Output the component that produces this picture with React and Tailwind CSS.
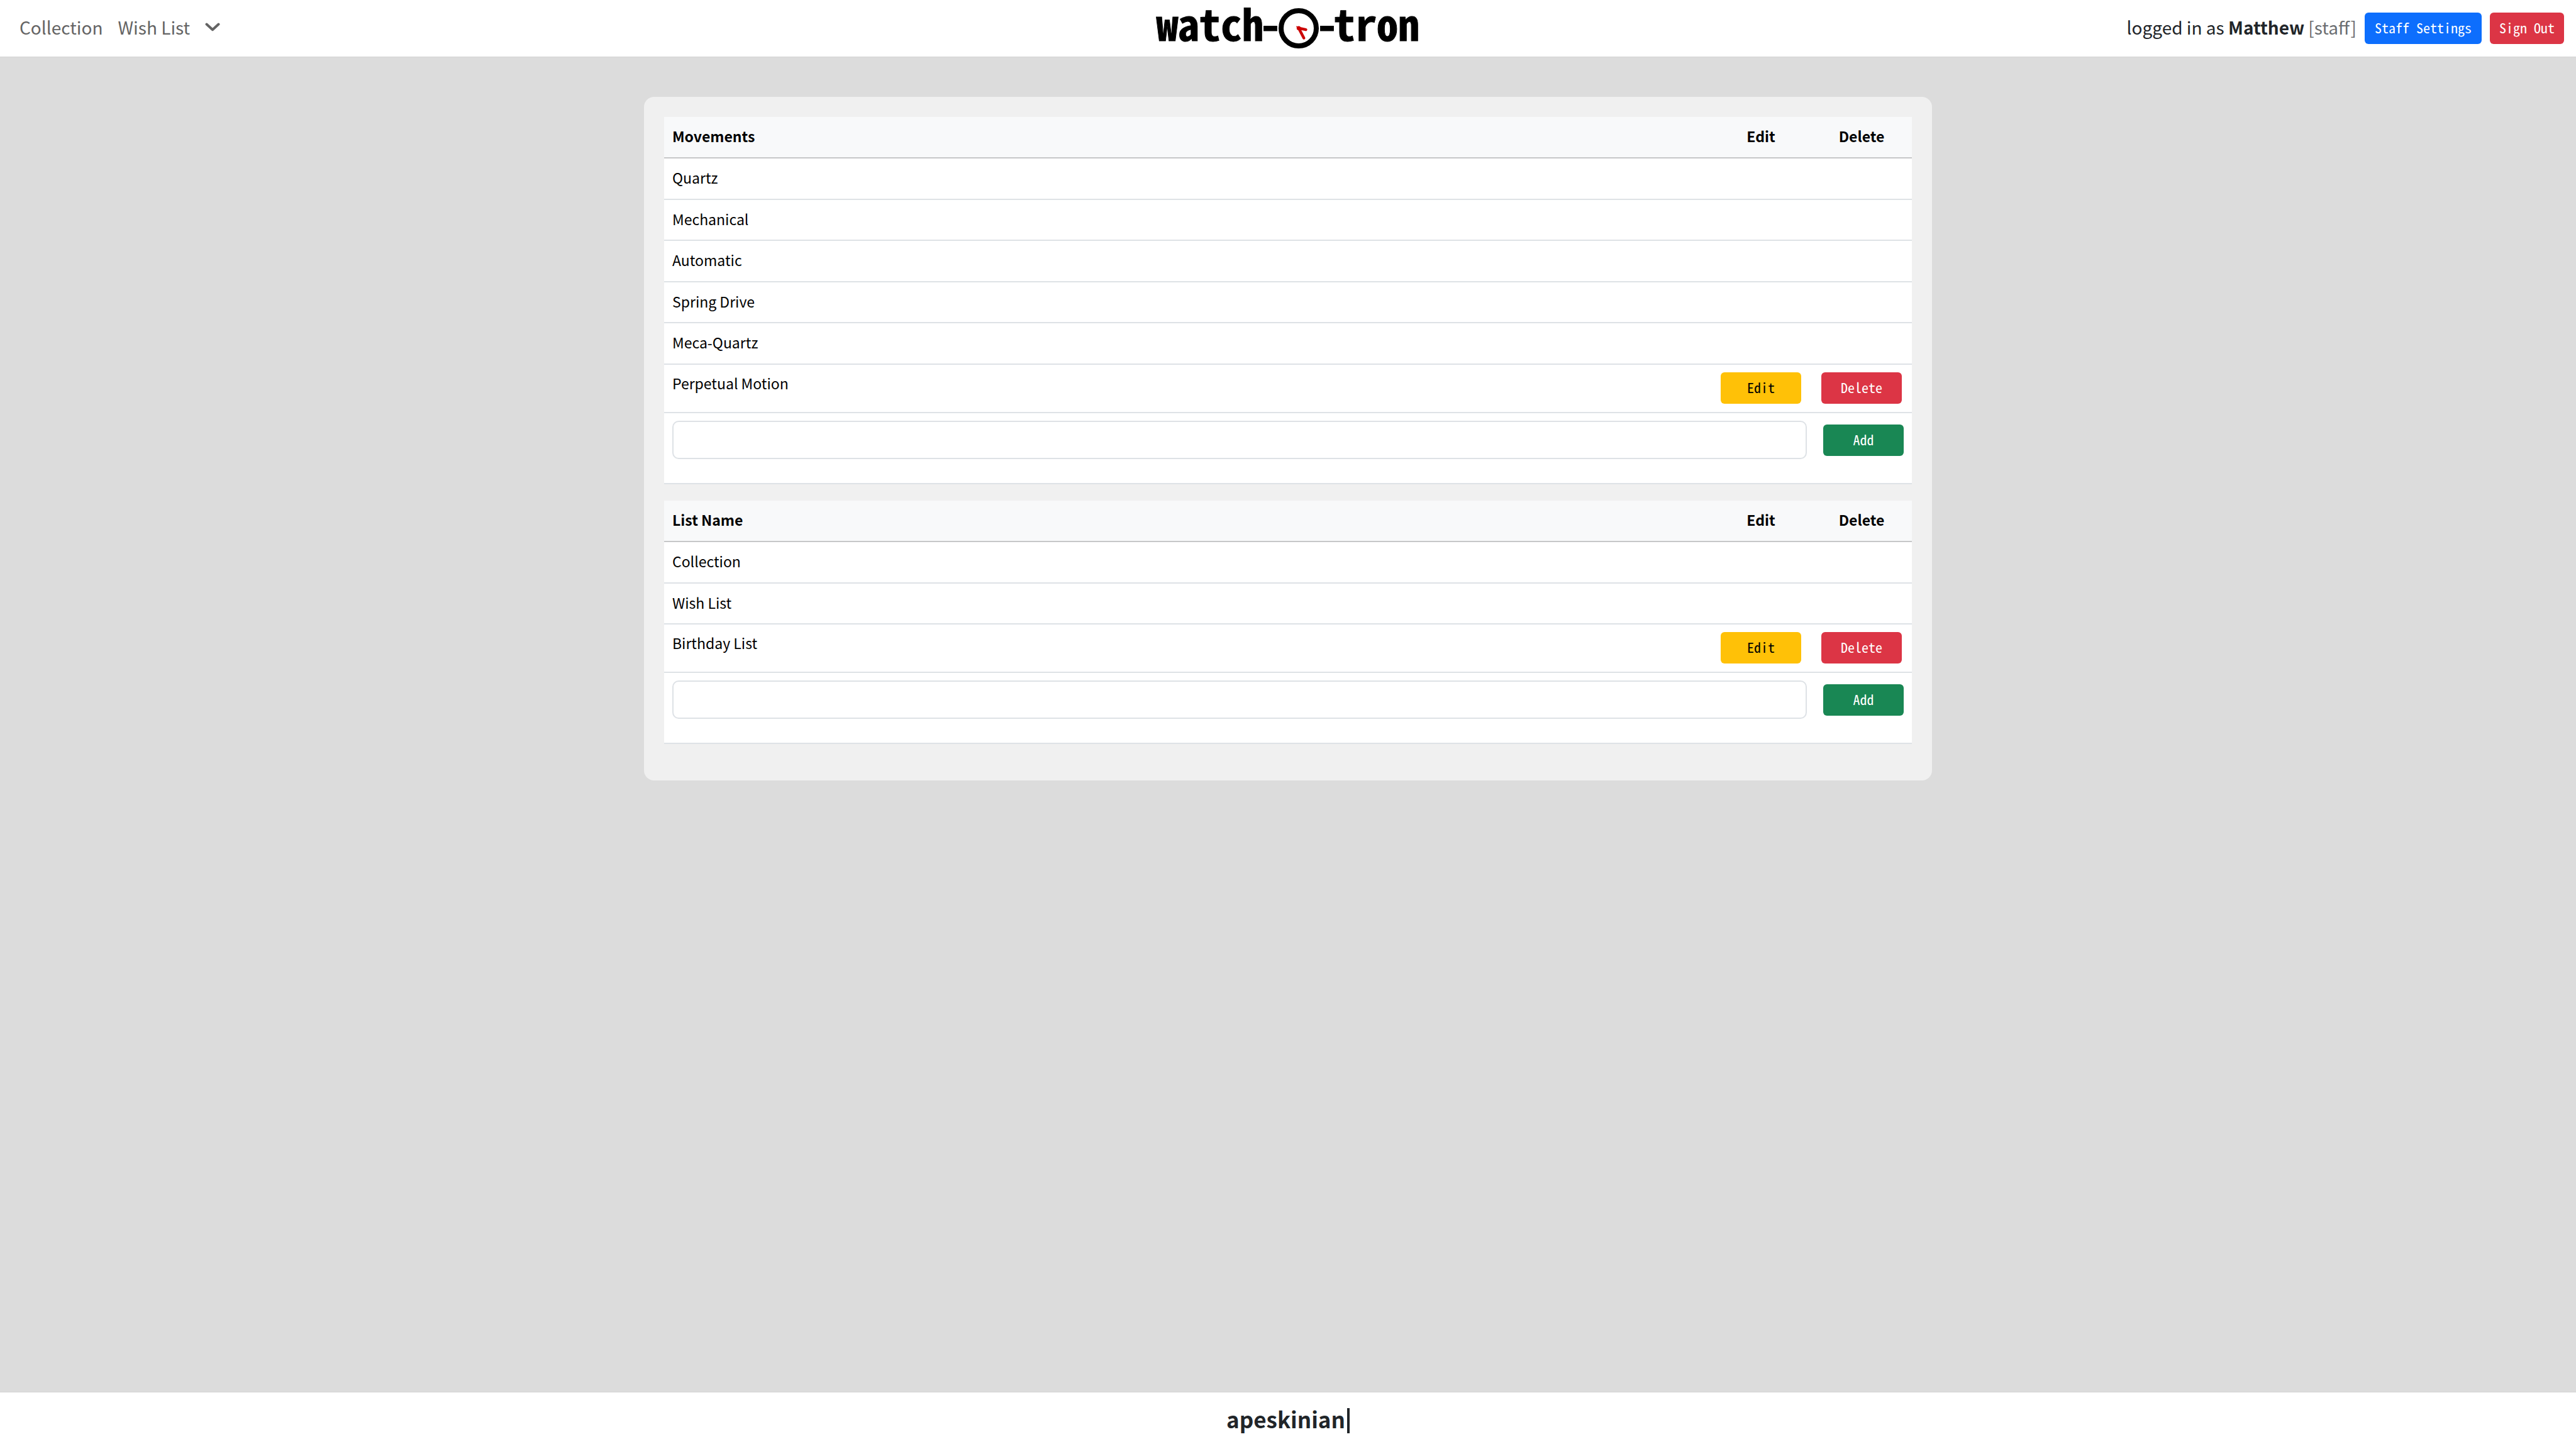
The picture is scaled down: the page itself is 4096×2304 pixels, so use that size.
const movements = [
  { name: "Quartz" },
  { name: "Mechanical" },
  { name: "Automatic" },
  { name: "Spring Drive" },
  { name: "Meca-Quartz" },
  { name: "Perpetual Motion", editable: true },
];

const lists = [
  { name: "Collection" },
  { name: "Wish List" },
  { name: "Birthday List", editable: true },
];

const MONO = "font-['Noto_Sans_Mono_CJK_JP','Liberation_Mono',monospace]";

function Button({ className, children }) {
  return (
    <button type="button" className={`${MONO} h-[50px] rounded-md pb-1 text-[22px] leading-8 font-medium ${className}`}>
      {children}
    </button>
  );
}

function Logo() {
  return (
    <a href="#home" aria-label="watch-O-tron" className={`${MONO} flex items-center text-[68px] leading-none font-bold text-black [-webkit-text-stroke:1px]`}>
      <span className="pb-[18px]">
        watch<span className="-mx-1.5">-</span>
      </span>
      <svg viewBox="0 0 80 80" className="mx-0.5 size-16" fill="none" strokeLinecap="round">
        <circle cx="40" cy="40" r="35" stroke="#000" strokeWidth="10" />
        <path d="M54.3 42.7 40 39.7 50.3 59.3" stroke="#cc0000" strokeWidth="5.6" />
        <circle cx="40" cy="39.7" r="4" fill="#cc0000" />
      </svg>
      <span className="pb-[18px]">
        <span className="-mx-1.5">-</span>tron
      </span>
    </a>
  );
}

function ItemTable({ title, rows, inputLabel }) {
  return (
    <table className="mb-[26px] w-full table-fixed border-collapse bg-white text-left text-[23px] leading-[38px] text-black">
      <thead>
        <tr className="h-[65px] border-b-2 border-[#c6c7c8] bg-[#f8f9fa]">
          <th scope="col" className="px-[13px] pb-1 font-bold">{title}</th>
          <th scope="col" className="w-40 pb-1 text-center font-bold">Edit</th>
          <th scope="col" className="w-40 pb-1 text-center font-bold">Delete</th>
        </tr>
      </thead>
      <tbody>
        {rows.map((row) =>
          row.editable ? (
            <tr key={row.name} className="h-[77px] border-b-2 border-[#dee2e6] align-top">
              <td className="px-[13px] pt-2.5">{row.name}</td>
              <td className="pt-3 text-center">
                <Button className="w-32 bg-[#ffc107] text-black">Edit</Button>
              </td>
              <td className="pt-3 text-center">
                <Button className="w-32 bg-[#dc3545] text-white">Delete</Button>
              </td>
            </tr>
          ) : (
            <tr key={row.name} className="border-b-2 border-[#dee2e6] odd:h-[66px] even:h-[65px]">
              <td className="px-[13px] pb-1">{row.name}</td>
              <td />
              <td />
            </tr>
          )
        )}
        <tr className="h-[113px] border-b-2 border-[#dee2e6] align-top">
          <td colSpan={3} className="px-[13px] pt-3">
            <form className="flex items-center gap-[26px]">
              <input
                type="text"
                aria-label={inputLabel}
                className="h-[61px] min-w-0 flex-1 rounded-[10px] border-2 border-[#dee2e6] bg-white px-4"
              />
              <Button className="w-32 bg-[#198754] text-white">Add</Button>
            </form>
          </td>
        </tr>
      </tbody>
    </table>
  );
}

export default function App() {
  return (
    <div className="flex min-h-screen flex-col bg-[#dcdcdc] font-['Noto_Sans_CJK_JP','Noto_Sans',sans-serif] text-[#212529]">
      <header className="grid h-[91px] grid-cols-[1fr_auto_1fr] items-center border-b border-[#d3d3d3] bg-white text-[28px] leading-10">
        <nav className="flex items-center gap-6 pl-[31px] text-[#646464]">
          <a href="#collection" className="pb-1">Collection</a>
          <a href="#wish-list" className="pb-1">Wish List</a>
          <button type="button" aria-label="More lists" className="pb-1">
            <svg viewBox="0 0 24 14" className="h-3.5 w-6" fill="none" stroke="currentColor" strokeWidth="4" strokeLinecap="round" strokeLinejoin="round">
              <path d="M2.5 2.5 12 11.2 21.5 2.5" />
            </svg>
          </button>
        </nav>
        <Logo />
        <div className="flex items-center justify-end gap-[13px] pr-[19px]">
          <p className="pb-1">
            logged in as <strong className="font-bold">Matthew</strong> <span className="text-[#6b6e71]">[staff]</span>
          </p>
          <Button className="bg-[#0d6efd] px-4 text-white">Staff Settings</Button>
          <Button className="bg-[#dc3545] px-[15px] text-white">Sign Out</Button>
        </div>
      </header>

      <main className="flex-1 pt-[63px]">
        <section className="mx-auto w-1/2 rounded-2xl bg-[#f0f0f0] px-8 pt-8 pb-8">
          <ItemTable title="Movements" rows={movements} inputLabel="New movement" />
          <ItemTable title="List Name" rows={lists} inputLabel="New list name" />
        </section>
      </main>

      <footer className="flex h-[91px] items-center justify-center gap-[3px] border-t border-[#d3d3d3] bg-white text-[35px] leading-none font-bold">
        <span className="pb-2">apeskinian</span>
        <span className="h-10 w-1 bg-[#212529]" />
      </footer>
    </div>
  );
}
